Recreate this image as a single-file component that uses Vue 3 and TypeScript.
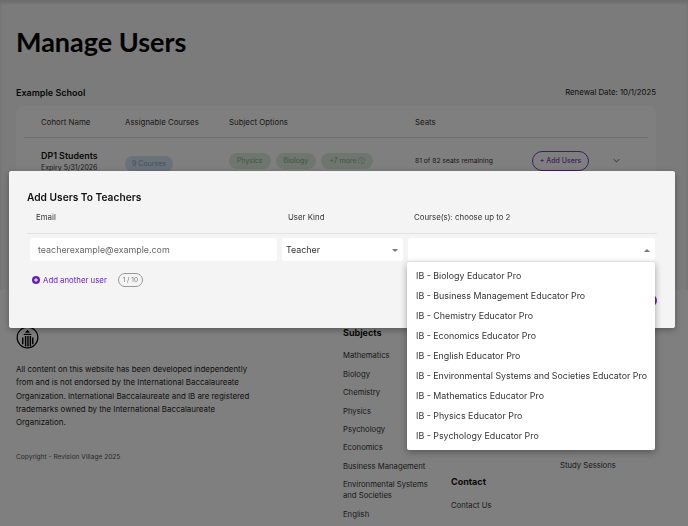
<script setup lang="ts">
const subjects = ['Mathematics', 'Biology', 'Chemistry', 'Physics', 'Psychology', 'Economics', 'Business Management', 'Environmental Systems and Societies', 'English']
const courses = ['Biology', 'Business Management', 'Chemistry', 'Economics', 'English', 'Environmental Systems and Societies', 'Mathematics', 'Physics', 'Psychology']
</script>

<template>
  <div class="page">
    <main class="main">
      <h1>Manage Users</h1>
      <div class="school">
        <strong>Example School</strong>
        <span>Renewal Date: 10/1/2025</span>
      </div>
      <section class="card">
        <div class="row head">
          <span>Cohort Name</span>
          <span>Assignable Courses</span>
          <span>Subject Options</span>
          <span>Seats</span>
        </div>
        <div class="row body">
          <div>
            <div class="cohort">DP1 Students</div>
            <div class="expiry">Expiry 5/31/2026</div>
          </div>
          <div><span class="chip blue">9 Courses</span></div>
          <div class="chips">
            <span class="chip green">Physics</span>
            <span class="chip green">Biology</span>
            <span class="chip green">+7 more ⓘ</span>
          </div>
          <div class="seats">81 of 82 seats remaining</div>
          <button class="add">+ Add Users</button>
          <svg class="chev" viewBox="0 0 10 6" width="7" height="5"><path d="M1 1l4 4 4-4" fill="none" stroke="#444" stroke-width="1.2" /></svg>
        </div>
      </section>
    </main>

    <footer class="footer">
      <div class="about">
        <svg class="logo" viewBox="0 0 24 24" width="23" height="23">
          <circle cx="12" cy="12" r="10.800" fill="none" stroke="#000" stroke-width="1.2" />
          <path d="M12 4l2.600 3H9.400z" fill="#000" />
          <path d="M8 8.800h8" stroke="#000" stroke-width="1.200" />
          <path d="M7 12v7M10 10.500v11M12.500 10.500v11M15 10.500v11M17.500 12v7" stroke="#000" stroke-width="1.500" />
        </svg>
        <p>All content on this website has been developed independently from and is not endorsed by the International Baccalaureate Organization. International Baccalaureate and IB are registered trademarks owned by the International Baccalaureate Organization.</p>
        <small>Copyright - Revision Village 2025</small>
      </div>
      <div class="col subj">
        <h4>Subjects</h4>
        <a v-for="s in subjects" :key="s">{{ s }}</a>
      </div>
      <div class="col contact">
        <h4>Contact</h4>
        <a>Contact Us</a>
      </div>
      <div class="col study">
        <a>Study Sessions</a>
      </div>
    </footer>

    <div class="overlay"></div>

    <div class="modal">
      <h2>Add Users To Teachers</h2>
      <div class="grid labels">
        <span class="email-label">Email</span>
        <span class="kind-label">User Kind</span>
        <span class="course-label">Course(s): choose up to 2</span>
      </div>
      <div class="grid fields">
        <div class="field email">teacherexample@example.com</div>
        <div class="field kind">Teacher<i class="caret"></i></div>
        <div class="field course"><i class="caret up"></i>
          <ul class="menu">
            <li v-for="c in courses" :key="c">IB - {{ c }} Educator Pro</li>
          </ul>
        </div>
      </div>
      <div class="another">
        <svg viewBox="0 0 10 10" width="8" height="8"><circle cx="5" cy="5" r="5" fill="#6a1fb5" /><path d="M5 2.500v5M2.500 5h5" stroke="#f4f4f4" stroke-width="1.300" /></svg>
        <span class="link">Add another user</span>
        <span class="count">1 / 10</span>
      </div>
      <span class="submit"></span>
    </div>
  </div>
</template>

<style>
html, body { margin: 0; overflow: hidden; }
</style>

<style scoped>
.page {
  position: relative;
  width: 688px;
  height: 526px;
  overflow: hidden;
  background: #fff;
  font-family: Inter, "Liberation Sans", sans-serif;
  color: #222;
}
.main { height: 290px; padding: 0 32px 0 16px; box-sizing: border-box; width: 688px; background: #f6f6f6; overflow: hidden; box-shadow: inset 0 3px 3px rgba(0,0,0,.12); }
h1 { margin: 0; padding-top: 26px; font: 700 27px/32px Lato, Inter, sans-serif; color: #000; }
.school { display: flex; justify-content: space-between; align-items: center; margin-top: 28px; height: 12px; font-size: 7.800px; color: #222; }
.school strong { font-size: 9px; font-weight: 600; color: #111; }
.card { margin-top: 8px; background: #fff; border-radius: 8px; padding: 0 8px; height: 170px; }
.row { display: flex; align-items: center; }
.head { height: 32px; padding-top: 1px; box-sizing: border-box; border-bottom: 1px solid #ddd; font-size: 7.850px; color: #333; }
.row > :nth-child(1) { width: 101px; padding-left: 17px; box-sizing: border-box; }
.row > :nth-child(2) { width: 104px; }
.row > :nth-child(3) { width: 186px; }
.row > :nth-child(4) { width: 117px; }
.body { height: 45px; }
.cohort { font-size: 8.900px; font-weight: 600; color: #111; }
.expiry { font-size: 7px; margin-top: 2px; color: #333; }
.chips { display: flex; gap: 5px; }
.chip { display: inline-block; border-radius: 9px; padding: 0 8px; height: 16px; line-height: 16px; font-size: 7px; }
.blue { background: #d5e3f0; color: #7aa0c8; padding: 0 7px; }
.green { background: #dfeadf; color: #82ae82; }
.seats { font-size: 6.750px; color: #333; }
.add { width: 57px; height: 20px; padding: 0; border: 1px solid #7d3fc0; background: #fff; border-radius: 10px; color: #7d3fc0; font: 500 7px Inter, sans-serif; }
.chev { margin-left: 24px; }

.footer { position: relative; display: grid; grid-template-columns: 327px 108px 109px 1fr; padding: 37px 16px 0; height: 236px; box-sizing: border-box; background: #fff; overflow: hidden; }
.about { display: flex; flex-direction: column; align-items: flex-start; }
.logo { margin-top: -1px; }
.about p { width: 236px; margin: 14px 0 0; font-size: 7.900px; line-height: 13.300px; color: #222; }
.about small { margin-top: 24px; font-size: 6.600px; color: #555; }
.col { display: flex; flex-direction: column; align-items: flex-start; font-size: 7.700px; color: #333; }
.col h4 { margin: 0 0 13px; font-size: 9px; font-weight: 700; color: #111; line-height: 12px; }
.subj { gap: 7.400px; width: 92px; }
.subj h4 { margin-bottom: 4px; }
.subj a { line-height: 11px; }
.contact { padding-top: 149px; }
.study { padding-top: 134px; }

.overlay { position: absolute; inset: 0; background: rgba(0, 0, 0, 0.5); backdrop-filter: blur(0.4px); }

.modal { position: absolute; left: 9px; top: 171px; width: 666px; height: 157px; box-sizing: border-box; background: #f4f4f4; border-radius: 2px; box-shadow: 0 2px 6px rgba(0,0,0,.3); padding: 18px 18px 0; }
h2 { margin: 0; font-size: 10.200px; font-weight: 600; line-height: 16px; color: #111; }
.grid { display: grid; grid-template-columns: 247px 121px 247px; column-gap: 5px; padding-left: 3px; }
.labels { padding-bottom: 10px; border-bottom: 1px solid #e2e2e2; margin-top: 7px; font-size: 7.850px; color: #333; line-height: 11px; }
.email-label { padding-left: 6px; }
.kind-label { padding-left: 6px; }
.course-label { padding-left: 6px; }
.fields { margin-top: 4px; }
.field { position: relative; height: 23px; line-height: 23px; background: #fff; border-radius: 3px; font-size: 8.900px; color: #333; box-sizing: border-box; }
.email { padding-left: 8px; color: #666; }
.kind { padding-left: 4px; }
.caret { position: absolute; right: 5px; top: 11px; border: 3px solid transparent; border-top: 3px solid #777; border-bottom: 0; }
.caret.up { transform: rotate(180deg); }
.menu { position: absolute; z-index: 2; left: -1px; top: 24px; width: 248px; margin: 0; padding: 4px 0; box-sizing: border-box; list-style: none; background: #fff; border-radius: 2px; box-shadow: 0 2px 7px rgba(0,0,0,.35); }
.menu li { height: 20px; padding-left: 9px; line-height: 20px; font-size: 8.900px; color: #333; white-space: nowrap; }
.another { display: flex; align-items: center; margin-top: 12px; padding-left: 5px; }
.link { margin-left: 3px; font-size: 7.800px; color: #6a1fb5; }
.count { margin-left: 11px; width: 25px; height: 14px; line-height: 12px; box-sizing: border-box; border: 1px solid #999; border-radius: 7px; text-align: center; font-size: 6.500px; color: #777; }
.submit { position: absolute; right: 18px; top: 123px; width: 20px; height: 13px; background: #6a1fb5; border-radius: 7px; }
</style>
